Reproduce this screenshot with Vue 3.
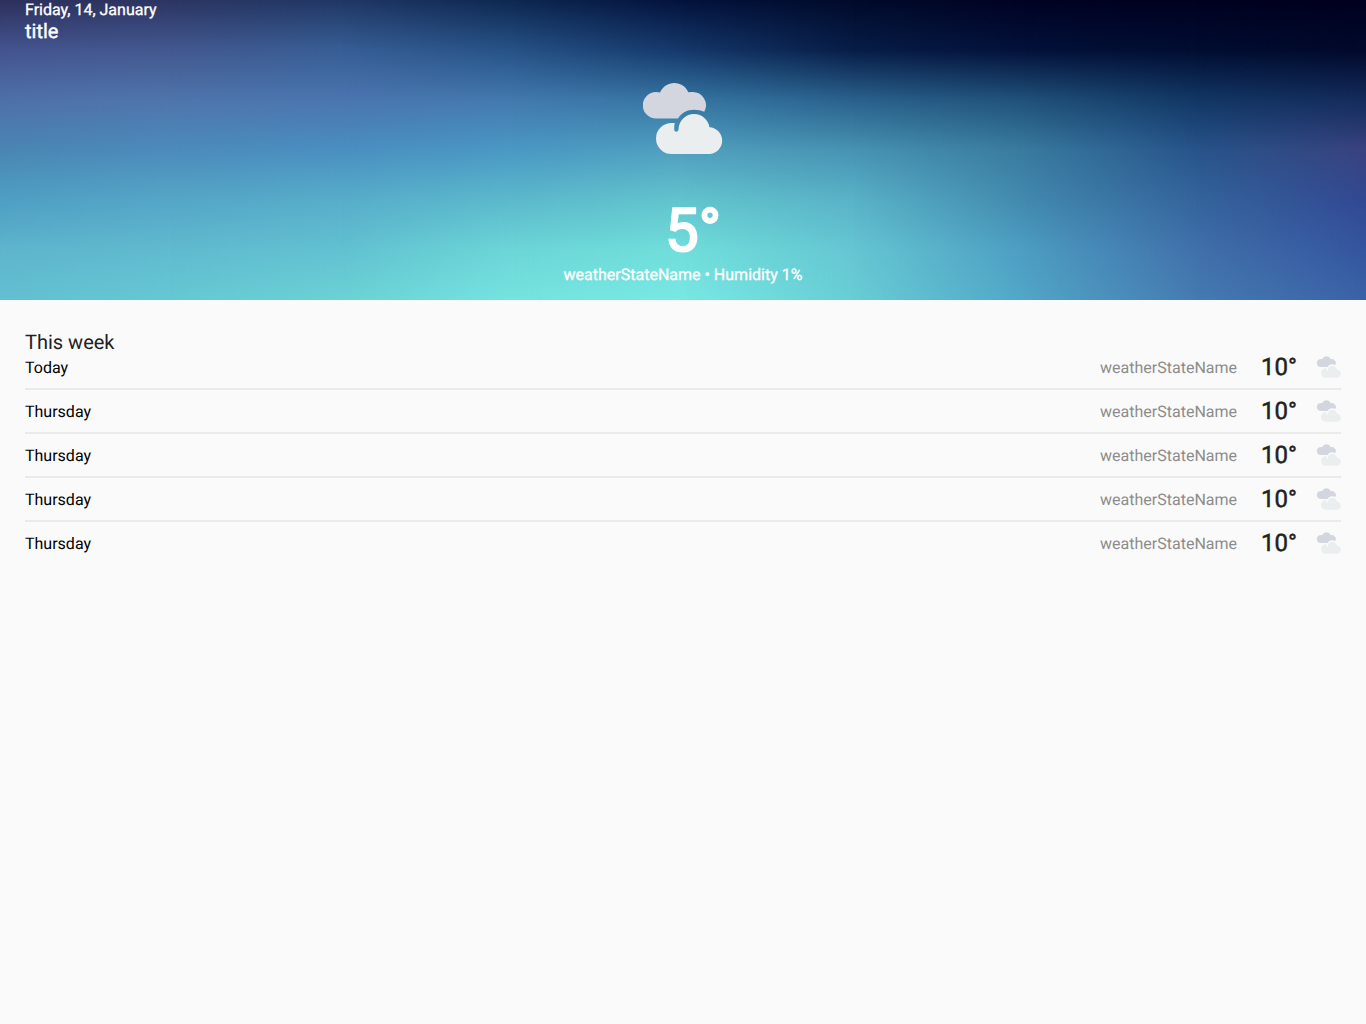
<script setup>
import { h } from 'vue'

const CloudIcon = () =>
  h('svg', { viewBox: '0 0 80 71', 'aria-hidden': 'true' }, [
    h('path', {
      fill: '#d3d6df',
      d: 'M13 35.5A13.2 13.2 0 0 1 13 9Q15.500 9 17 9.500C20 3.500 25 0 31.300 0C37.500 0 43 3.500 45.300 9.300Q47 9 49 9A13.300 13.300 0 0 1 61.300 28.700Q57 26.700 51 26.700C44 26.700 38.500 30 35 35.500Z',
    }),
    h('path', {
      fill: '#eaeeee',
      d: 'M28.500 71A15.500 15.500 0 0 1 28.500 40H31.700Q31.100 43 31.200 46.500C31.300 49.500 35.200 49.500 35.500 46.500C36 37 43 31 51 31C59 31 65.500 37 66.500 44.300A13.400 13.400 0 0 1 67.200 71Z',
    }),
  ])

// Sky colours from top to bottom, one list per evenly spaced column.
const sky = [
  ['#2d305c', '#445490', '#4f70a9', '#4a86b4', '#4f9fc3', '#5eb5cd', '#62c0d1'],
  ['#2c3562', '#43588f', '#4f75ac', '#4c8bbb', '#55a6c7', '#60bacf', '#66c8d3'],
  ['#203765', '#375e95', '#4b75af', '#4a8fc1', '#57adca', '#62c1d1', '#6bd2d5'],
  ['#0d2750', '#265286', '#4379ae', '#4a98c4', '#5cb9cc', '#6cd6d7', '#76e3e0'],
  ['#03123c', '#15386a', '#3575a2', '#509fbf', '#62c4cd', '#70dedb', '#79e8e4'],
  ['#010a2a', '#071d47', '#2a618c', '#4793b2', '#59b2c7', '#65c6d2', '#68cdd5'],
  ['#010223', '#03113a', '#20517a', '#397a9f', '#4289ae', '#4c9dc2', '#51a6c7'],
  ['#000120', '#010d31', '#123765', '#27548a', '#34649c', '#4170aa', '#457bb1'],
  ['#00001f', '#01092b', '#142b5c', '#39427f', '#324892', '#34559f', '#3b62a6'],
]
const last = sky.length - 1
const layers = sky.map((colors, i) => {
  const start = (Math.max(i - 1, 0) * 100) / last
  const end = (i * 100) / last
  const style = { backgroundImage: `linear-gradient(to bottom, ${colors.join(', ')})` }
  if (i > 0) style.maskImage = `linear-gradient(to right, transparent ${start}%, black ${end}%)`
  return style
})

const days = ['Today', 'Thursday', 'Thursday', 'Thursday', 'Thursday'].map((name) => ({
  name,
  state: 'weatherStateName',
  temp: 10,
}))
</script>

<template>
  <div class="page">
    <header class="hero">
      <div class="sky" aria-hidden="true">
        <div v-for="(layer, i) in layers" :key="i" class="sky-layer" :style="layer"></div>
      </div>
      <div class="heading">
        <p class="date">Friday, 14, January</p>
        <h1 class="title">title</h1>
      </div>
      <div class="current">
        <CloudIcon class="current-icon" />
        <p class="current-temp">5°</p>
        <p class="current-state">weatherStateName • Humidity 1%</p>
      </div>
    </header>
    <main class="week">
      <h2 class="week-title">This week</h2>
      <ul class="days">
        <li v-for="(day, i) in days" :key="i" class="day">
          <span class="day-name">{{ day.name }}</span>
          <span class="day-state">{{ day.state }}</span>
          <span class="day-temp">{{ day.temp }}°</span>
          <CloudIcon class="day-icon" />
        </li>
      </ul>
    </main>
  </div>
</template>

<style>
body {
  margin: 0;
  background: #fafafa;
}
</style>

<style scoped>
.page {
  font-family: Roboto, sans-serif;
  font-size: 16px;
  color: #000;
  text-rendering: geometricPrecision;
}
p,
h1,
h2,
ul {
  margin: 0;
  padding: 0;
}
.hero {
  position: relative;
  display: flex;
  flex-direction: column;
  min-height: 300px;
  box-sizing: border-box;
  padding: 0 25px 15px;
  color: #fff;
}
.sky,
.sky-layer {
  position: absolute;
  inset: 0;
}
.heading,
.current {
  position: relative;
}
.date,
.title,
.current-state,
.day-temp {
  font-weight: 400;
  -webkit-text-stroke: 0.02em currentColor;
}
.date {
  line-height: 20px;
}
.title {
  font-size: 20px;
  line-height: 22px;
}
.current {
  display: flex;
  flex-direction: column;
  align-items: center;
  margin-top: 41px;
}
.current-icon {
  display: block;
  width: 80px;
  height: 71px;
}
.current-temp {
  margin-top: 43px;
  padding-left: 20px;
  font-size: 60px;
  line-height: 68px;
  -webkit-text-stroke: 2px currentColor;
}
.current-state {
  line-height: 20px;
}
.week {
  padding: 30px 25px;
}
.week-title {
  font-size: 20px;
  font-weight: 400;
  line-height: 24px;
  color: #212121;
}
.days {
  list-style: none;
}
.day {
  display: flex;
  align-items: center;
  height: 26px;
  padding: 8px 0;
  border-bottom: 2px solid #eaeaea;
}
.day:first-child {
  padding-top: 0;
}
.day:last-child {
  border-bottom: 0;
}
.day-name {
  flex: 1;
}
.day-state {
  color: #8c8c8c;
}
.day-temp {
  margin: 0 20px 0 24px;
  font-size: 24px;
  color: #212121;
}
.day-icon {
  width: 24px;
  height: 22px;
}
</style>
